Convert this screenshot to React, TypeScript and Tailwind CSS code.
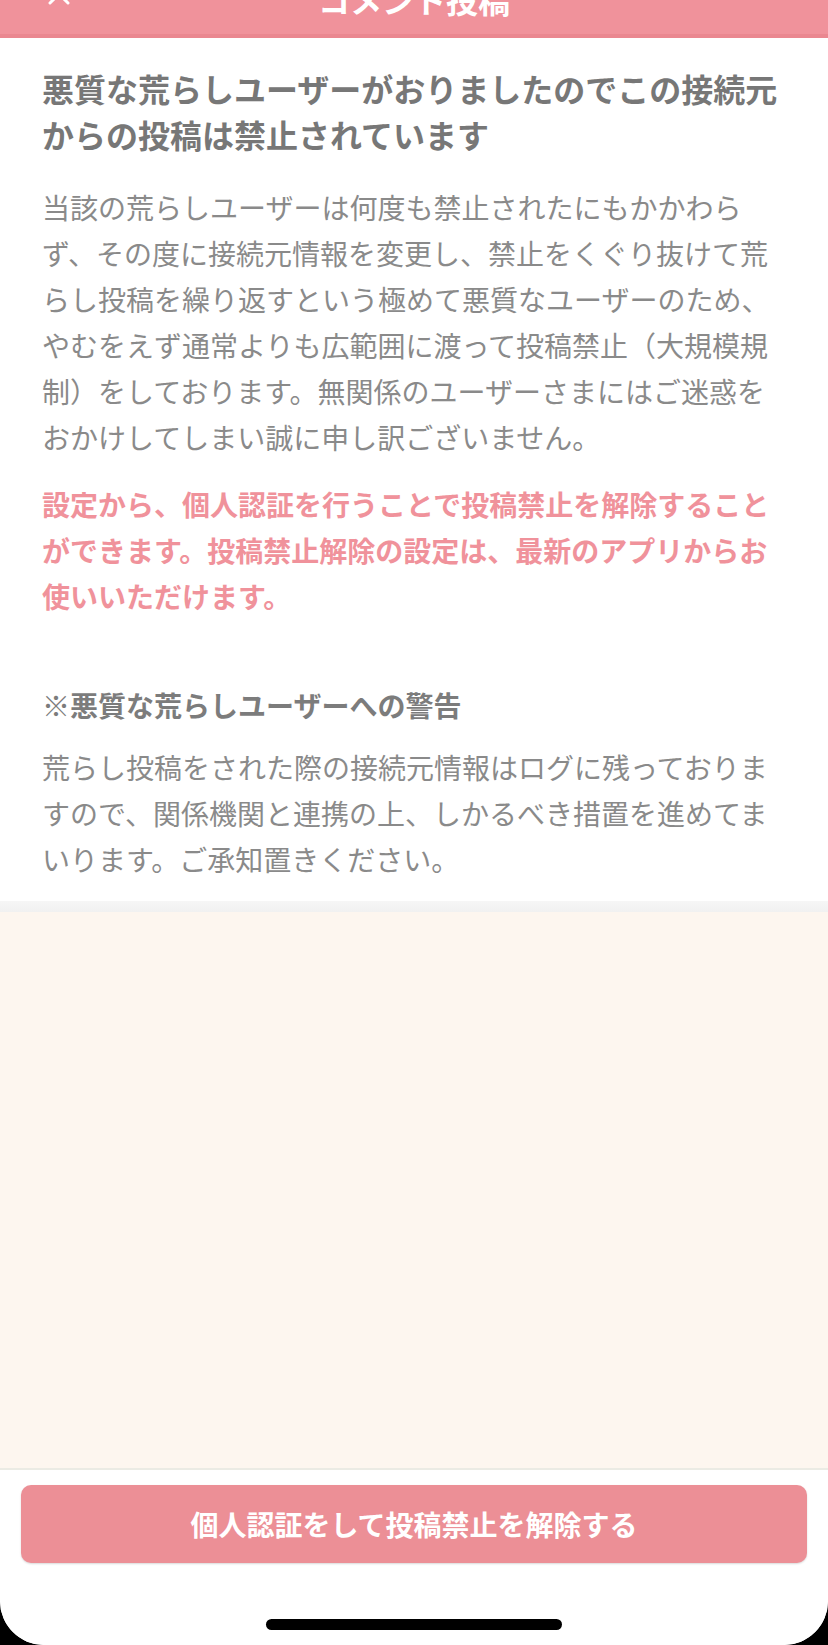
import React from 'react';

const CloseIcon: React.FC = () => (
    <svg width="24" height="24" viewBox="0 0 24 24" fill="none" stroke="white" strokeWidth="3" strokeLinecap="round">
        <path d="M3 3l18 18M21 3L3 21" />
    </svg>
);

const App: React.FC = () => {
    return (
        <div className="h-[1645px] bg-black font-['Noto_Sans_CJK_JP','Noto_Sans',sans-serif]">
            <div className="flex h-full flex-col overflow-hidden rounded-b-[44px] bg-white">
                <header className="h-[38px] shrink-0 overflow-hidden border-b-4 border-[#ea8790] bg-[#f0929b]">
                    <div className="-mt-[17px] grid h-[32px] grid-cols-[1fr_auto_1fr] items-center">
                        <div className="-mt-[1px] ml-[47px] self-start">
                            <CloseIcon />
                        </div>
                        <h1 className="text-[32px] leading-[32px] font-bold text-white">コメント投稿</h1>
                        <div />
                    </div>
                </header>

                <section className="shrink-0 bg-white px-[42px] pt-[27px] pb-[19px]">
                    <h2 className="text-[32px] leading-[46px] font-bold text-[#777777]">
                        悪質な荒らしユーザーがおりましたのでこの接続元<br />
                        からの投稿は禁止されています
                    </h2>
                    <p className="mt-[27px] text-[28px] leading-[46px] text-[#8a8a8a]">
                        当該の荒らしユーザーは何度も禁止されたにもかかわら<br />
                        ず、その度に接続元情報を変更し、禁止をくぐり抜けて荒<br />
                        らし投稿を繰り返すという極めて悪質なユーザーのため、<br />
                        やむをえず通常よりも広範囲に渡って投稿禁止（大規模規<br />
                        制）をしております。無関係のユーザーさまにはご迷惑を<br />
                        おかけしてしまい誠に申し訳ございません。
                    </p>
                    <p className="mt-[21px] text-[28px] leading-[46px] font-bold text-[#f0929b]">
                        設定から、個人認証を行うことで投稿禁止を解除すること<br />
                        ができます。投稿禁止解除の設定は、最新のアプリからお<br />
                        使いいただけます。
                    </p>
                    <h3 className="mt-[63px] text-[28px] leading-[46px] font-bold text-[#7c7c7c]">
                        ※悪質な荒らしユーザーへの警告
                    </h3>
                    <p className="mt-[16px] text-[28px] leading-[46px] text-[#8a8a8a]">
                        荒らし投稿をされた際の接続元情報はログに残っておりま<br />
                        すので、関係機関と連携の上、しかるべき措置を進めてま<br />
                        いります。ご承知置きください。
                    </p>
                </section>

                <div className="h-[11px] shrink-0 bg-gradient-to-b from-[#f6f6f6] to-[#f1f1f1]" />
                <div className="flex-1 bg-[#fdf6ef]" />

                <footer className="shrink-0 border-t-2 border-[#ebebe4] bg-white px-[21px] pt-[15px] pb-[15px]">
                    <button className="flex h-[78px] w-full items-center justify-center rounded-[10px] bg-[#ec8f96] text-[28px] font-bold text-white shadow-[0_1px_2px_rgba(0,0,0,0.15)]">
                        個人認証をして投稿禁止を解除する
                    </button>
                    <div className="mx-auto mt-[56px] h-[11px] w-[296px] rounded-full bg-black" />
                </footer>
            </div>
        </div>
    );
};

export default App;
